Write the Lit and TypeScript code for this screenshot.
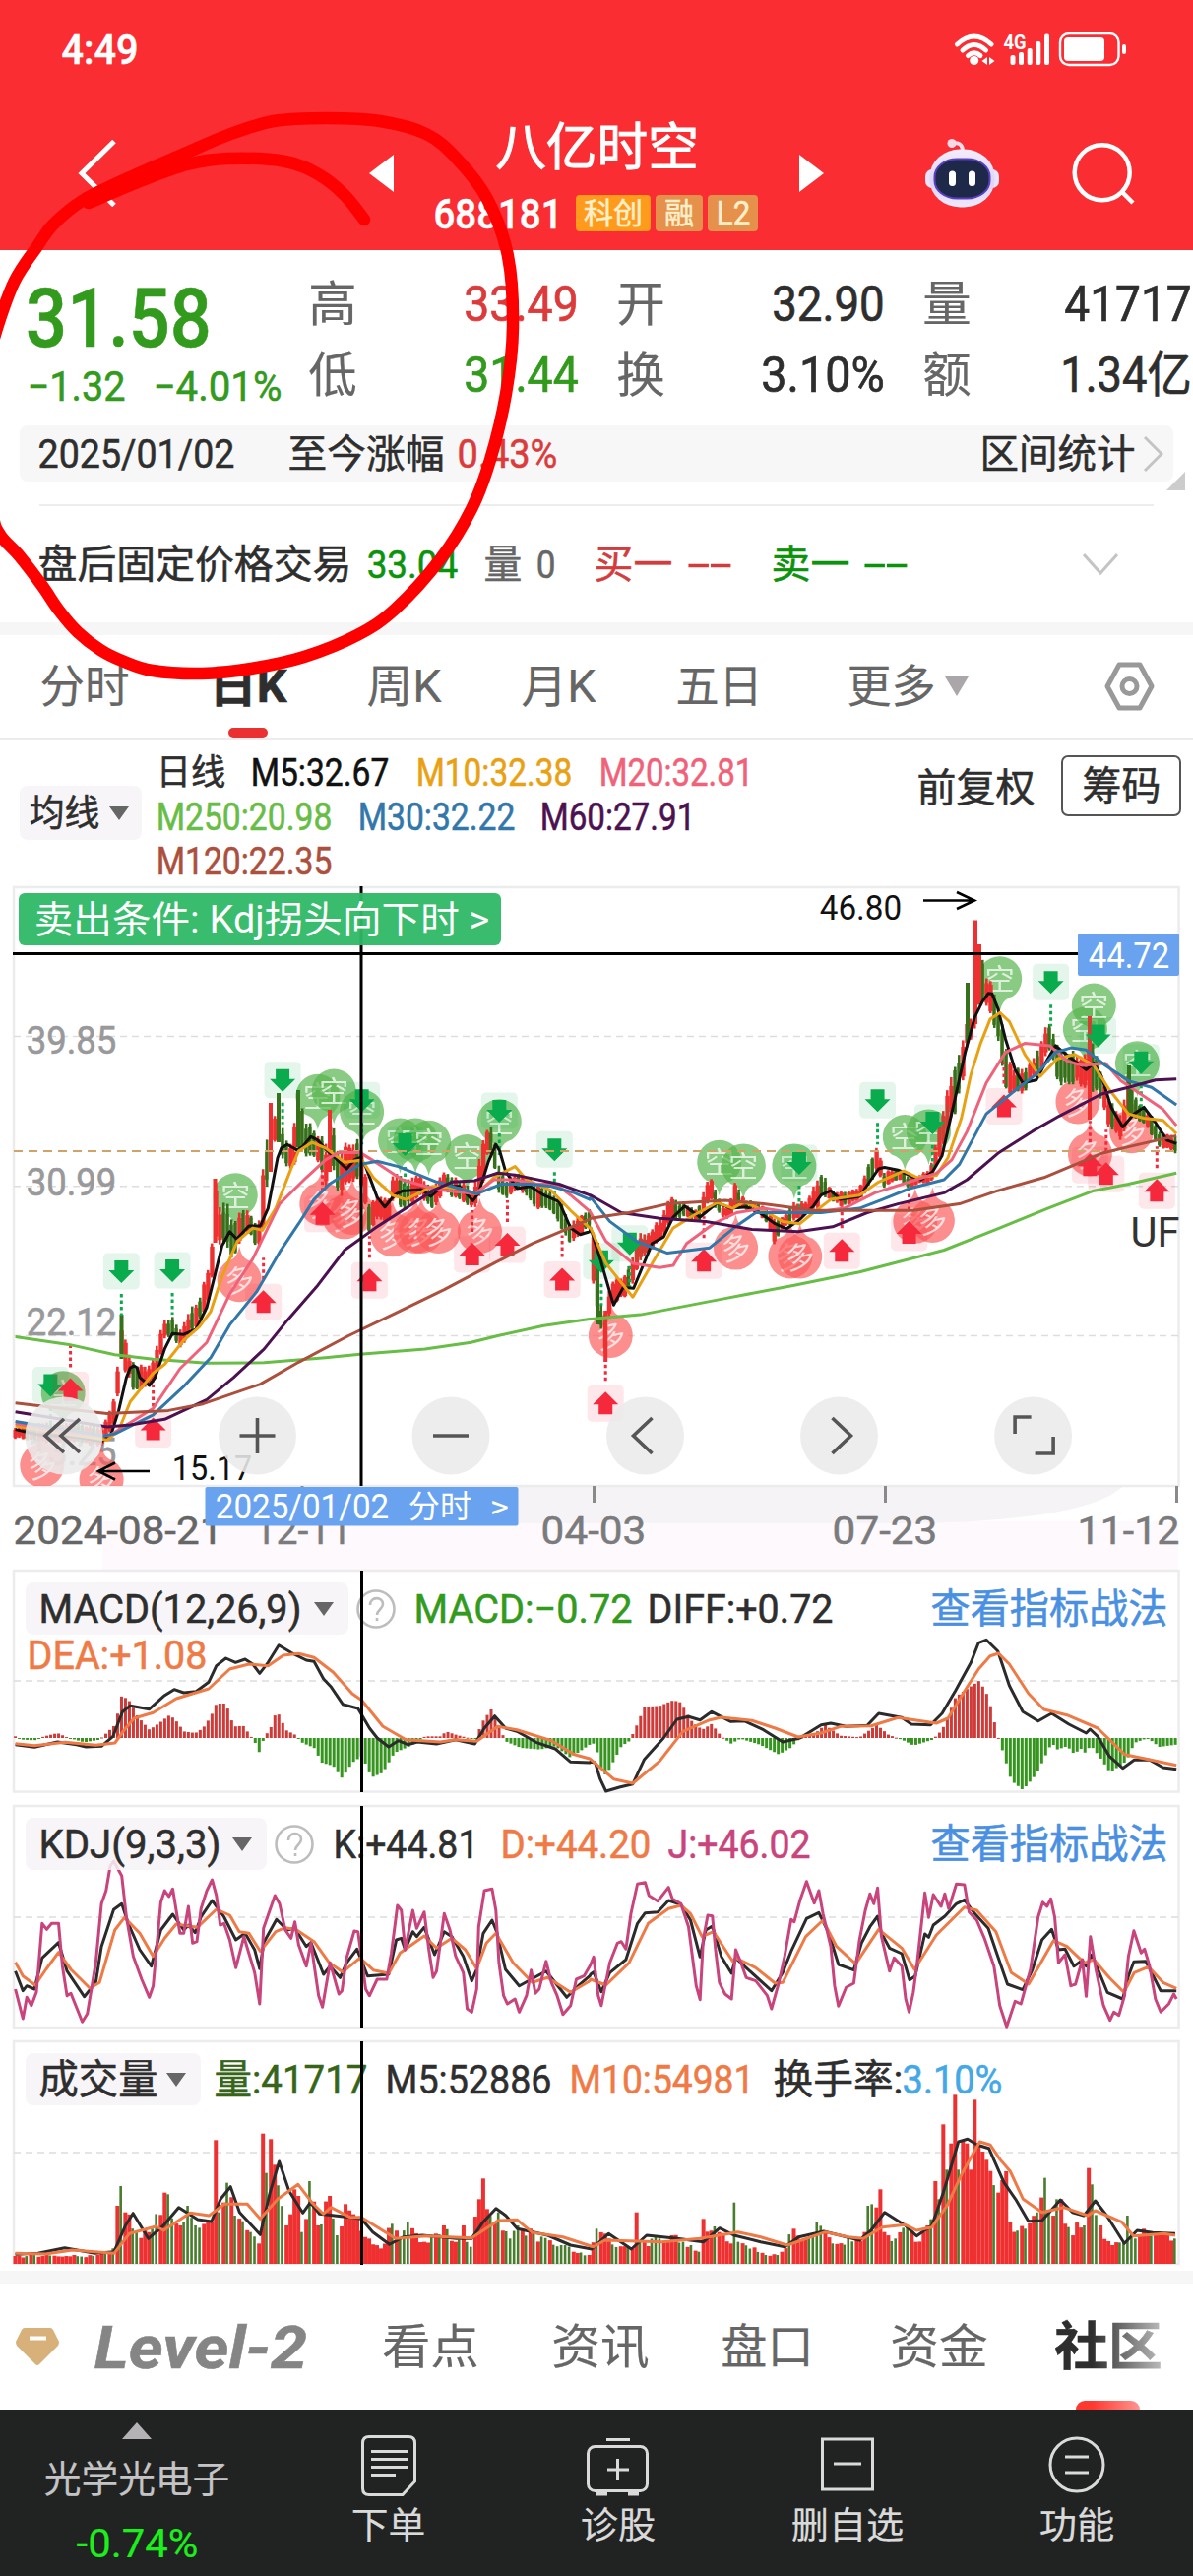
import { LitElement, html, svg, css } from "lit";
import { customElement } from "lit/decorators.js";

/** Text run with a fixed measure; `lead` is the space before it. */
const tx = (s: string, w: number, size: number, cls = "", lead = 0) => {
  const b = size * 0.035;
  return html`<svg class="t ${cls}" width=${lead + w} height=${size}>
    <text x=${lead - b} y=${size * 0.855} font-size=${size} textLength=${w + 2 * b} lengthAdjust="spacingAndGlyphs">${s}</text>
  </svg>`;
};
const st = (s: string, x: number, cy: number, w: number, size: number, cls: string) =>
  svg`<text class=${cls} x=${x - size * 0.035} y=${cy + size * 0.355} font-size=${size} textLength=${w + size * 0.07} lengthAdjust="spacingAndGlyphs">${s}</text>`;

type P = number[];
const parse = (s: string): P[] => s.trim().split(/\s+/).map((p) => p.split(",").map(Number));
/** Places a left-half and a right-half series on the page grid. */
const join = (l: string, r: string, oy: number, sy: number): P[] => [
  ...parse(l).map((p) => [p[0] / 2.5705, ...p.slice(1).map((v) => oy + v / sy)]),
  ...parse(r).map((p) => [600 + p[0] / 2.562, ...p.slice(1).map((v) => oy + v / sy)]),
];
const volScale = (s: string): P[] => parse(s).map(([x, y]) => [x / 1.294, 2060 + y / 3]);
const line = (pts: P[], cls: string) =>
  svg`<polyline class="ln ${cls}" points=${pts.map((p) => p[0].toFixed(1) + "," + p[1].toFixed(1)).join(" ")}></polyline>`;
const at = (pts: P[], x: number, k = 1): number => {
  let i = 1;
  while (i < pts.length - 1 && pts[i][0] < x) i++;
  const a = pts[i - 1], b = pts[i];
  const f = Math.max(0, Math.min(1, (x - a[0]) / (b[0] - a[0] || 1)));
  return a[k] + (b[k] - a[k]) * f;
};
/** Smooth path through every point (Catmull-Rom as cubic segments). */
const smooth = (s: string): string => {
  const p = parse(s);
  let d = `M${p[0][0]} ${p[0][1]}`;
  for (let i = 0; i < p.length - 1; i++) {
    const a = p[Math.max(0, i - 1)], b = p[i], c = p[i + 1], e = p[Math.min(p.length - 1, i + 2)];
    d += `C${b[0] + (c[0] - a[0]) / 6} ${b[1] + (c[1] - a[1]) / 6} ${c[0] - (e[0] - b[0]) / 6} ${c[1] - (e[1] - b[1]) / 6} ${c[0]} ${c[1]}`;
  }
  return d;
};
const rnd = (n: number) => {
  const v = Math.sin(n * 127.1 + 11.7) * 43758.5453;
  return v - Math.floor(v);
};
const BARS = Array.from({ length: 296 }, (_, i) => 15.5 + i * 3.995);

const MAS: [string, P[]][] = [
  ["m250", join("40,1047 180,1065 300,1088 400,1098 540,1107 690,1106 850,1095 940,1087 1110,1075 1230,1060 1300,1045 1420,1022 1540,1007",
    "0,1007 130,997 350,960 530,930 700,900 920,850 1050,805 1190,755 1310,715 1400,700 1525,675", 890, 2.24)],
  ["m5", join("40,1258 100,1270 200,1275 265,1285 290,1270 310,1215 330,1140 340,1118 350,1113 358,1118 365,1140 390,1158 405,1140 430,1075 450,1040 480,1042 512,1030 540,980 560,910 580,840 600,808 618,825 650,795 680,795 700,755 725,640 735,618 750,610 775,622 790,615 812,592 830,600 850,620 875,640 905,665 925,645 940,640 955,660 985,730 1005,752 1030,725 1050,716 1100,712 1125,728 1155,705 1200,705 1235,738 1250,720 1275,650 1295,610 1305,625 1320,670 1350,710 1385,705 1420,725 1460,740 1490,800 1515,815 1540,808",
    "0,800 25,870 60,975 85,935 112,937 160,835 190,820 215,775 245,750 285,775 330,742 365,755 405,752 440,765 480,790 510,802 545,780 580,750 600,725 625,715 650,735 700,728 730,690 750,665 765,662 800,668 835,682 860,690 890,672 915,635 950,500 975,400 1000,320 1020,285 1035,266 1045,267 1060,300 1080,370 1105,440 1125,470 1160,463 1180,430 1210,385 1245,410 1290,440 1310,425 1330,455 1355,525 1385,570 1415,540 1440,525 1470,560 1500,600 1525,608", 890, 2.24)],
  ["m10", join("40,1250 150,1265 280,1282 310,1260 340,1195 400,1130 430,1110 480,1055 520,1025 550,990 580,910 620,830 660,800 685,805 720,755 760,665 780,625 815,605 850,618 900,650 945,645 975,685 1025,725 1060,735 1130,705 1200,710 1245,722 1290,685 1345,660 1375,690 1440,715 1490,760 1540,800",
    "0,800 40,880 110,957 160,880 215,800 270,770 330,742 370,755 400,740 450,760 500,785 545,790 580,765 625,735 700,725 750,695 815,670 850,685 900,680 930,640 965,550 990,450 1015,380 1040,325 1065,310 1090,330 1130,405 1170,455 1215,415 1260,405 1310,430 1350,485 1400,540 1440,550 1490,555 1525,585", 890, 2.24)],
  ["m20", join("40,1245 200,1268 285,1272 400,1210 470,1120 540,1060 600,950 660,870 730,745 800,685 850,645 885,628 940,628 990,655 1050,690 1140,712 1240,722 1290,690 1345,690 1400,700 1450,700 1490,725 1540,762",
    "0,765 40,830 110,880 180,890 215,885 250,835 320,790 380,765 450,755 520,765 600,762 660,755 740,720 830,695 900,675 940,645 980,580 1030,470 1080,400 1130,380 1195,385 1240,420 1280,430 1340,425 1380,465 1440,500 1490,530 1525,567", 890, 2.24)],
  ["m30", join("40,1240 270,1272 300,1268 400,1225 480,1160 550,1095 600,1020 670,945 730,855 780,790 820,735 860,700 940,655 985,648 1040,660 1140,695 1245,722 1310,700 1385,700 1440,705 1500,720 1540,735",
    "0,730 50,785 120,830 200,857 310,845 380,795 430,765 600,765 700,755 760,735 830,710 920,690 960,655 1030,540 1100,490 1160,450 1210,400 1250,390 1290,395 1340,430 1400,465 1460,480 1525,520", 890, 2.24)],
  ["m60", join("40,1218 160,1235 280,1252 340,1248 430,1235 540,1190 610,1140 690,1075 750,1010 830,930 900,850 980,800 1060,755 1130,715 1180,695 1240,692 1300,675 1350,680 1460,700 1540,725",
    "0,725 80,765 180,778 300,785 420,803 540,808 630,797 720,765 800,745 920,720 980,690 1060,630 1150,580 1220,545 1330,495 1400,480 1470,463 1525,461", 890, 2.24)],
  ["m120", join("40,1198 160,1210 280,1222 440,1215 530,1200 680,1155 780,1105 910,1045 1030,995 1160,940 1290,880 1390,835 1500,795 1540,780",
    "0,778 100,765 200,745 350,737 450,745 580,760 840,760 960,745 1060,715 1180,685 1330,630 1400,615 1525,590", 890, 2.24)],
];

const RANGE = join(
  "40,1250,1280 120,1240,1290 200,1240,1290 265,1250,1300 295,1200,1260 306,1120,1200 317,1000,1100 328,1050,1130 350,1110,1175 395,1110,1165 410,1055,1130 430,1000,1060 450,1000,1050 470,1030,1080 500,975,1050 520,960,1020 550,870,960 562,690,840 575,740,850 595,730,850 610,790,880 630,745,830 650,760,810 675,800,855 688,650,800 705,530,660 715,545,610 728,500,610 740,570,660 755,620,665 768,560,670 780,500,620 800,550,640 830,580,650 850,600,720 865,540,650 885,620,750 905,600,700 935,590,700 950,640,740 965,740,820 985,720,780 1015,730,790 1030,660,730 1055,680,770 1100,680,730 1130,700,765 1160,665,720 1200,690,740 1235,710,760 1255,620,740 1275,560,620 1290,580,660 1305,660,730 1325,690,740 1350,670,710 1380,680,740 1410,700,765 1440,715,760 1465,740,800 1490,790,845 1510,770,820 1540,750,800",
  "3,740,800 8,800,980 15,830,1015 25,960,1020 38,990,1100 52,920,975 90,900,960 110,860,930 125,810,880 150,810,860 175,780,840 210,725,790 240,740,775 280,755,790 300,690,760 315,685,740 340,740,780 360,750,780 377,690,760 400,735,760 440,740,770 465,760,800 480,780,845 500,770,800 530,740,790 560,735,770 590,690,760 603,665,730 625,710,740 655,715,755 700,705,740 730,640,700 745,610,670 765,670,710 800,660,690 830,680,715 850,680,700 885,660,705 900,590,660 925,495,590 950,410,540 970,360,480 983,300,370 992,330,380 1001,210,360 1011,160,290 1030,220,300 1045,240,330 1065,300,400 1085,400,500 1100,430,500 1130,440,495 1155,405,460 1175,370,440 1188,320,400 1200,340,400 1218,380,490 1240,390,480 1265,400,470 1290,400,490 1299,350,500 1310,390,490 1335,450,520 1345,500,580 1370,530,590 1383,540,610 1400,440,540 1415,490,560 1435,520,560 1460,540,590 1480,580,620 1505,580,625 1525,590,635",
  890, 2.24);

const candles = () => BARS.map((x, i) => {
  const hi = at(RANGE, x, 1), lo = at(RANGE, x, 2), h = lo - hi;
  const slope = at(RANGE, x + 6, 1) - at(RANGE, x - 6, 1);
  const up = rnd(i) > (slope > 3 ? 0.68 : slope < -3 ? 0.15 : 0.4);
  const t = hi + rnd(i + 400) * h * 0.16, b = lo - rnd(i + 900) * h * 0.16;
  const k = h * (0.05 + rnd(i + 50) * 0.16);
  return svg`<g class=${up ? "up" : "dn"}><rect x=${x - 1.3} y=${t} width="2.6" height=${b - t}></rect>
    <rect x=${x - 2} y=${t + k} width=${up ? 4.4 : 3.4} height=${Math.max(2, b - t - k * 1.6)}></rect></g>`;
});
/** Sessions whose range stands far outside their neighbours. */
const SPIKES: [number, number, number, string][] = [
  [991, 934.5, 1040, "up"], [995, 959, 1020, "up"], [615.2, 1331, 1383, "up"], [607, 1262, 1345, "dn"], [1107, 1032, 1137, "up"],
  [983, 998, 1058, "dn"], [283, 1110, 1160, "dn"], [303, 1107, 1165, "dn"], [275, 1120, 1190, "up"], [335, 1127, 1190, "up"], [123.500, 1335, 1380, "dn"], [218.500, 1197, 1262, "up"], [1147, 1082, 1130, "dn"],
];

const marks = (l: string, r: string) => join(l, r, 890, 2.24);
const SHORT = marks("615,725 830,500 872,488 945,535 1045,600 1085,600 1120,605 1220,637 1304,557 165,1175",
  "335,650 398,658 530,658 818,592 880,580 1065,232 1287,347 1310,293 1423,425");
const LONG = marks("625,918 840,745 900,775 920,765 1025,815 1085,808 1100,808 1145,808 1253,808 110,1340 265,1372",
  "52,1045 378,845 520,865 545,865 845,785 890,783 1268,513 1300,632 1408,580");
const SELL = marks("317,898 450,896 738,463 945,509 1058,609 1304,533 1448,621 132,1157",
  "28,875 102,835 543,652 747,509 890,560 1198,240 1321,362 1433,423");
const BUY = marks("184,1168 400,1258 688,968 842,768 965,919 1233,860 1325,838 1468,917",
  "39,1199 295,874 654,852 829,811 1076,523 1300,657 1342,677 1474,715");

const balloon = ([x, y]: P, long: boolean) => svg`<g class=${long ? "bl-r" : "bl-g"} transform="translate(${x} ${y})">
  <path d=${long ? "M-13-18.500C-5-21-2-25 0-34 2-25 5-21 13-18.500A22.500 22.500 0 1 1-13-18.500Z" : "M-13 18.500C-5 21-2 25 0 34 2 25 5 21 13 18.500A22.500 22.500 0 1 0-13 18.500Z"}></path>
  <text class="bl-t" x="-15" y="11" font-size="30" transform=${long ? "rotate(-12)" : ""}>${long ? "多" : "空"}</text></g>`;
const arrow = ([x, y]: P, buy: boolean) => svg`<g class=${buy ? "ar-r" : "ar-g"} transform="translate(${x} ${y}) scale(1 ${buy ? -1 : 1})">
  <rect class="ar-b" x="-18.5" y="-18.5" width="37" height="37" rx="5"></rect>
  <path class="ar-s" d="M0 23V45"></path><path class="ar-a" d="M-7-11H7V-1H13L0 12-13-1H-7Z"></path></g>`;

const DIFF = join("40,575 90,583 150,567 200,575 225,582 265,580 295,550 320,475 340,457 390,467 430,425 455,407 480,417 512,413 545,385 565,335 590,312 615,325 640,315 660,330 678,358 700,325 728,272 760,295 800,318 820,322 845,375 865,400 895,452 935,465 965,525 985,555 1015,582 1040,563 1065,575 1090,567 1140,573 1190,560 1240,573 1265,525 1292,488 1320,525 1350,535 1400,568 1450,588 1490,628 1540,630",
  "0,628 12,630 25,680 40,717 75,705 110,695 140,620 190,555 225,498 255,490 285,500 315,475 365,505 400,503 450,530 500,567 545,555 600,515 625,510 665,520 720,517 750,480 810,493 835,513 885,515 915,480 950,410 990,325 1010,265 1030,256 1060,290 1090,395 1125,475 1165,503 1200,480 1245,513 1290,540 1300,528 1320,550 1350,610 1385,647 1415,622 1455,622 1490,645 1525,650", 1580, 3);
const DEA = join("40,572 90,578 170,568 250,577 300,570 325,530 350,495 400,478 460,435 545,405 600,345 650,330 700,335 740,303 780,298 820,310 870,355 920,420 945,440 1000,520 1060,560 1150,567 1190,560 1245,565 1300,520 1350,530 1440,563 1500,605 1540,618",
  "0,620 60,680 110,693 180,625 240,535 310,500 340,492 420,502 480,525 540,552 600,540 650,520 730,518 800,493 900,510 930,495 980,400 1010,345 1040,305 1062,297 1090,330 1140,420 1180,468 1240,485 1320,525 1390,605 1440,617 1525,638", 1580, 3);
const HIST = join("40,550 60,560 90,562 115,550 150,540 175,553 220,568 260,560 300,515 310,465 318,424 340,445 360,490 390,530 415,510 440,487 455,495 480,535 510,540 530,525 550,490 565,450 590,450 610,520 635,518 655,550 668,573 678,602 690,550 705,530 720,478 730,485 745,530 770,545 790,570 820,585 840,630 870,640 893,677 920,630 945,610 970,675 1000,660 1030,600 1070,580 1110,550 1150,550 1165,535 1190,545 1240,560 1260,505 1283,467 1300,510 1320,565 1360,585 1410,590 1450,580 1490,615 1540,575",
  "0,575 12,570 25,640 40,670 60,625 80,580 100,565 115,530 140,460 180,457 215,440 235,447 260,500 290,530 315,512 340,550 365,572 390,557 440,575 490,605 520,585 545,555 580,545 610,515 650,548 700,553 745,515 775,545 820,565 840,578 890,560 915,530 950,430 980,405 1012,380 1035,430 1060,550 1075,605 1095,685 1125,713 1160,665 1200,570 1215,590 1240,580 1258,603 1280,585 1290,607 1300,575 1320,605 1352,660 1395,625 1415,570 1450,555 1480,582 1525,575", 1580, 3);

const KJ = join("40,1320 60,1410 70,1345 82,1370 95,1330 110,1120 122,1138 135,1120 153,1120 163,1250 175,1340 185,1333 215,1420 228,1395 240,1310 250,1240 265,1060 277,1020 288,945 297,930 318,975 330,1100 348,1220 370,1290 390,1345 400,1310 420,1055 430,1020 441,1038 451,1015 470,1150 480,1150 492,1068 503,1180 514,1175 525,1075 540,1020 554,987 565,1035 575,1125 585,1120 600,1170 616,1255 637,1160 665,1270 678,1365 688,1135 700,1095 718,1035 730,1060 745,1140 760,1165 770,1115 780,1185 800,1250 812,1180 832,1340 842,1375 862,1240 885,1335 893,1325 905,1225 925,1143 935,1145 945,1230 955,1320 965,1340 985,1290 1010,1290 1022,1210 1038,1065 1048,1080 1058,1200 1078,1080 1088,1135 1108,1085 1120,1200 1131,1285 1140,1265 1160,1090 1175,1140 1190,1220 1210,1270 1220,1380 1232,1390 1245,1320 1250,1130 1265,1020 1285,1015 1295,1080 1303,1240 1315,1340 1325,1365 1345,1350 1356,1390 1375,1340 1387,1262 1398,1333 1408,1320 1426,1235 1440,1300 1455,1340 1470,1397 1490,1370 1505,1290 1525,1280 1540,1250",
  "0,1245 8,1222 20,1340 28,1370 50,1240 70,1180 80,1175 92,1198 105,1090 122,1000 142,995 152,1035 175,1052 203,1010 213,1045 235,1060 255,1130 275,1310 285,1352 293,1170 305,1095 317,1097 325,1200 335,1300 350,1335 367,1350 378,1200 390,1235 405,1285 430,1295 460,1340 471,1380 490,1300 505,1220 522,1108 530,1115 545,1050 562,992 582,1058 594,1020 605,1090 625,1190 635,1310 645,1372 665,1315 685,1302 700,1170 715,1080 727,1030 737,1060 747,1012 757,1160 778,1265 790,1225 810,1250 820,1350 829,1390 840,1330 850,1240 870,1027 880,1102 892,1032 912,1068 922,1030 932,1075 952,1000 973,1002 985,1085 1005,1110 1025,1165 1050,1250 1065,1370 1083,1435 1105,1357 1120,1365 1145,1260 1165,1100 1177,1055 1188,1068 1198,1045 1208,1100 1218,1240 1235,1215 1250,1310 1262,1305 1280,1230 1290,1342 1301,1160 1315,1260 1335,1370 1352,1415 1362,1390 1375,1400 1390,1340 1400,1220 1414,1142 1433,1210 1442,1198 1455,1250 1470,1350 1484,1390 1505,1365 1518,1335 1525,1350", 1580, 3);
const KK = join("40,1265 60,1325 70,1310 90,1320 110,1225 153,1178 175,1265 220,1343 250,1300 265,1190 297,1078 318,1060 335,1120 365,1200 395,1250 420,1140 451,1092 480,1140 492,1125 510,1148 525,1100 554,1050 585,1100 616,1170 640,1150 665,1200 678,1258 690,1175 722,1108 750,1140 770,1135 800,1190 812,1178 845,1275 862,1250 888,1285 905,1240 932,1198 960,1280 1015,1275 1035,1170 1048,1165 1058,1200 1078,1145 1088,1160 1108,1132 1135,1215 1160,1145 1180,1160 1210,1220 1232,1295 1245,1260 1262,1150 1285,1110 1297,1145 1320,1260 1356,1310 1426,1265 1480,1345 1510,1310 1540,1280",
  "0,1275 8,1268 28,1328 50,1270 92,1230 122,1120 142,1088 175,1085 203,1050 235,1062 260,1110 285,1222 300,1140 317,1128 340,1220 367,1272 378,1225 405,1255 471,1325 500,1270 522,1205 562,1105 594,1087 620,1150 645,1245 685,1262 705,1180 727,1130 747,1098 757,1150 778,1195 810,1212 830,1292 845,1280 870,1152 880,1162 892,1125 922,1098 952,1060 973,1048 1000,1090 1035,1135 1060,1220 1085,1305 1125,1322 1150,1260 1175,1170 1200,1138 1218,1200 1235,1198 1258,1250 1280,1232 1290,1250 1305,1215 1345,1330 1385,1350 1400,1280 1414,1237 1445,1235 1484,1325 1525,1325", 1580, 3);
const KD = join("40,1238 60,1280 92,1308 120,1260 153,1208 185,1260 235,1318 260,1300 300,1140 325,1102 365,1150 400,1220 430,1165 460,1122 515,1132 565,1077 600,1095 625,1145 650,1150 680,1205 720,1145 745,1133 775,1140 820,1175 860,1240 895,1268 940,1225 975,1262 1015,1272 1045,1210 1108,1158 1140,1195 1180,1165 1215,1200 1245,1258 1270,1180 1295,1150 1340,1240 1390,1300 1430,1285 1490,1330 1540,1295",
  "0,1290 40,1308 100,1240 150,1120 203,1075 235,1065 260,1090 290,1160 320,1145 370,1235 378,1225 430,1255 480,1302 500,1300 560,1160 605,1110 640,1190 690,1243 750,1138 810,1195 843,1260 900,1155 973,1070 1005,1080 1055,1145 1095,1270 1140,1305 1205,1172 1240,1190 1285,1240 1310,1230 1350,1285 1388,1330 1415,1270 1452,1252 1490,1300 1525,1318", 1580, 3);

const VOL = volScale("20,693 60,690 100,690 130,690 150,670 155,540 160,480 165,560 180,620 200,610 215,500 222,505 235,600 250,540 260,600 278,590 284,340 289,560 292,530 300,470 310,570 330,620 341,655 346,320 351,440 357,337 362,415 375,600 385,490 392,510 400,620 407,465 420,600 432,510 445,630 455,535 470,580 485,640 500,670 516,595 525,640 536,590 560,650 584,600 600,650 610,600 620,665 629,520 635,457 642,550 655,560 670,640 683,600 700,620 740,660 775,690 787,610 800,640 832,670 837,560 842,650 870,640 882,630 900,650 918,680 926,580 945,620 961,655 967,530 973,650 1010,690 1030,680 1043,610 1060,640 1077,590 1095,655 1125,640 1135,620 1143,540 1152,545 1158,490 1163,620 1180,640 1192,600 1205,650 1220,600 1230,465 1236,520 1241,292 1246,430 1251,350 1257,202 1262,430 1267,340 1272,350 1277,430 1282,217 1288,360 1298,400 1310,500 1323,435 1330,590 1350,610 1365,560 1375,455 1382,560 1394,520 1405,605 1427,600 1433,425 1438,475 1445,600 1460,660 1480,650 1484,570 1492,640 1505,610 1520,620 1545,640");
const V5 = volScale("20,688 50,685 85,668 125,685 150,680 165,600 175,563 195,640 215,600 235,545 260,582 278,588 290,520 303,482 315,560 342,628 355,500 367,405 380,495 398,562 408,530 420,565 460,575 475,580 490,620 512,658 530,635 555,630 580,635 600,640 620,640 635,590 652,548 665,570 680,610 720,630 750,660 778,672 800,625 830,672 850,630 890,640 925,650 946,608 965,630 1000,650 1032,665 1050,635 1083,618 1130,645 1145,615 1163,560 1190,600 1205,632 1225,600 1240,500 1260,345 1272,337 1285,355 1300,365 1320,470 1335,520 1352,587 1370,585 1394,522 1410,560 1425,570 1440,525 1455,570 1478,655 1495,615 1515,622 1545,625");
const V10 = volScale("20,685 60,687 95,675 150,685 170,625 205,603 215,615 250,562 275,570 295,535 325,535 342,580 365,520 392,475 410,530 425,565 435,545 460,575 475,575 520,640 560,632 620,638 655,585 680,583 700,622 740,635 780,665 795,645 870,650 920,640 970,620 1000,635 1035,660 1085,620 1115,635 1135,640 1160,605 1190,598 1205,615 1225,605 1245,540 1265,440 1288,345 1302,355 1315,400 1328,435 1345,520 1370,560 1398,545 1430,570 1440,555 1475,590 1490,632 1530,625 1545,630");

const volBars = () => BARS.map((x, i) => {
  const near = VOL.filter((p) => Math.abs(p[0] - x) <= 2).map((p) => p[1]);
  const y0 = near.length ? Math.min(...near) : at(VOL, x);
  const peak = y0 < 2232;
  const up = rnd(i) > 0.4 || y0 < 2192;
  const y = Math.min(2294, peak || near.length ? y0 : y0 + (rnd(i + 77) - 0.3) * (2299 - y0) * 0.35);
  return svg`<rect class=${up ? "vu" : "vd"} x=${x - 2} y=${y} width=${up ? 4 : 2.6} height=${2299 - y}></rect>`;
});
const histBars = () => BARS.map((x) => {
  const y = at(HIST, x), z = 1765;
  return svg`<rect class=${y < z ? "hu" : "hd"} x=${x - 1.4} y=${Math.min(y, z)} width="3" height=${Math.max(1, Math.abs(y - z))}></rect>`;
});

const caret = () => html`<svg class="caret" width="20" height="14"><path d="M0 0H20L10 14Z"></path></svg>`;
const help = () => html`<svg class="help" width="40" height="40" viewBox="-20 -20 40 40"><circle r="18.5"></circle>
  <path d="M-6-4C-6-13 7-13 7-5 7 0 1 1 1 6M1 9V12"></path></svg>`;
const round = (x: number, d: string) => svg`<g class="rb" transform="translate(${x} 1458)"><circle r="39.5"></circle><path d=${d}></path></g>`;

@customElement("app-root")
export class AppRoot extends LitElement {
  static styles = css`
    :host { display: block; position: relative; width: 1212px; height: 2616px; overflow: hidden; background: #fff;
      font-family: Roboto, "Noto Sans CJK SC", sans-serif; font-weight: 400; color: #2e2e2e; }
    svg { display: block; flex: none; }
    .t { overflow: visible; fill: currentColor; stroke: currentColor; stroke-width: .55; }
    .row { display: flex; align-items: center; }
    .med { font-weight: 500; } .bold { font-weight: 700; }
    .g { color: #329a1d; } .r { color: #dc3b3b; } .gr { color: #666; } .w { color: #fff; }
    .head { height: 254px; background: #fa2d33; color: #fff; }
    .status { height: 99px; justify-content: space-between; padding: 0 67px 0 64px; }
    .status svg { fill: #fff; }
    .nav { height: 154px; }
    .back { margin-left: 79px; fill: none; stroke: #fff; stroke-width: 5; }
    .prev { margin-left: 257px; fill: #fff; } .next { margin-left: 41px; fill: #fff; }
    .name { margin-left: 42px; width: 329px; }
    .title { height: 96px; justify-content: center; } .title svg { margin-top: 5px; stroke-width: 1; } .code { height: 42px; gap: 5px; padding-bottom: 16px; }
    .tag { height: 37px; border-radius: 4px; background: #e5914b; color: #ffefc8; display: flex; align-items: center; justify-content: center; width: 48px; }
    .tag.kc { width: 76px; margin-left: 10px; background: #ff9b1c; } .tag.l2 { width: 51px; }
    .bot { margin-left: 102px; } .find { margin-left: 74px; fill: none; stroke: #fff; stroke-width: 4.5; }
    .quote { height: 178px; display: flex; }
    .last { width: 285px; flex: none; padding: 26px 0 0 29px; box-sizing: border-box; }
    .chg { height: 50px; margin-top: 3px; }
    .grid { display: grid; grid-template-columns: 271px 269px 270px; column-gap: 42px; grid-template-rows: 72px 72px; padding: 18px 0 0 30px; }
    .cell { display: flex; align-items: center; justify-content: space-between; }
    .cell .t { stroke-width: .7; }
    .cell .gr { stroke-width: .2; }
    .rangebar { height: 57px; margin: 0 20px; background: #f7f7f7; border-radius: 8px; padding: 0 10px 0 20px; }
    .sp { flex: 1; }
    .thin { fill: none; stroke: #c4c4c4; stroke-width: 3; }
    .corner { height: 23px; display: flex; justify-content: flex-end; padding-right: 8px; align-items: flex-start; }
    .corner svg { fill: #ccc; margin-top: -10px; }
    .after { height: 120px; box-sizing: border-box; margin: 0 40px; padding-right: 36px; border-top: 2px solid #ededed; }
    .deep { color: #0b930b; } .buy { color: #d23c3c; }
    .band { height: 13px; background: #f6f6f6; }
    .tabs { height: 106px; border-bottom: 2px solid #ececec; box-sizing: border-box; padding: 0 39px 0 42px; gap: 84px; }
    .tab { display: flex; flex-direction: column; align-items: center; height: 104px; justify-content: space-between; }
    .tab::before { content: ""; height: 10px; }
    .tab::after { content: ""; height: 10px; width: 40px; border-radius: 5px; }
    .tab.on::after { background: #ea3030; }
    .tab .gr { stroke-width: .2; }
    .more { fill: #aaa6aa; margin-left: -73px; } .hex { fill: none; stroke: #999; stroke-width: 5; margin-left: auto; }
    .tab.last-tab { margin-left: 5px; }
    .legend { height: 149px; display: flex; }
    .pick { background: #f7f3f7d9; border-radius: 8px; display: flex; align-items: center; justify-content: space-between; box-sizing: border-box; height: 53px; }
    .ma { width: 124px; margin: 47px 16px 0 20px; padding: 0 13px 0 11px; height: 55px; }
    .caret { fill: #666; }
    .mas { width: 773px; padding-top: 10px; } .mas .row { height: 45px; }
    .fq { height: 97px; gap: 28px; }
    .chip { width: 118px; height: 58px; border: 2px solid #555; border-radius: 7px; display: flex; align-items: center; justify-content: center; margin-top: -4px; }
    .m5 { color: #111; } .m10 { color: #e9a113; } .m20 { color: #f0627a; } .m250 { color: #67bd45; } .m30 { color: #3277a9; } .m60 { color: #4c1150; } .m120 { color: #ac4f3d; }
    .panel { position: relative; }
    .p-main { height: 695px; } .p-macd, .p-kdj { height: 239px; } .p-vol { height: 233px; }
    .panel > svg { overflow: visible; }
    .frame { fill: none; stroke: #ececec; stroke-width: 2.5; }
    .dash { stroke: #ddd; stroke-width: 1.5; stroke-dasharray: 7 5; } .dash.o { stroke: #d0a468; stroke-width: 1.8; stroke-dasharray: 9 6; }
    .ln { fill: none; stroke: currentColor; stroke-width: 3; stroke-linejoin: round; }
    .blk { color: #2b2b2b; } .org { color: #ef7a45; } .pnk { color: #c9447c; }
    .up { fill: #ef3030; } .dn { fill: #37701a; }
    .vu { fill: #ee3130; } .vd { fill: #477d2c; } .hu { fill: #cf3b38; } .hd { fill: #36951f; }
    .ax { fill: #99989b; stroke: #99989b; stroke-width: .6; } .dt { fill: #7b7b7d; stroke: #7b7b7d; stroke-width: .5; } .dt0 { fill: #666; stroke: #666; stroke-width: .5; } .ink { fill: #111; } .wt { fill: #fff; } .uf { fill: #333; }
    .bl-g { fill: #55b34cb0; } .bl-r { fill: #fa5c5cb0; } .bl-t { fill: #fff; opacity: .72; }
    .ar-g { color: #0aab4c; fill: #0aab4c; } .ar-r { color: #f5283c; fill: #f5283c; }
    .ar-b { opacity: .11; } .ar-s { stroke: currentColor; stroke-width: 3; stroke-dasharray: 3.5 3; }
    .rb circle { fill: #eaeaeae0; } .rb path { fill: none; stroke: #555; stroke-width: 3.6; }
    .x { stroke: #000; stroke-width: 3; } .pt { fill: none; stroke: #000; stroke-width: 2.6; }
    .badge { fill: #2fb866f2; } .pop { fill: #69a3f0; } .tick { stroke: #8a8a8a; stroke-width: 3; }
    .pinkish { fill: #fdf9fd; } .shade { fill: #f5f3f5; }
    .over { position: absolute; left: 0; top: 0; width: 100%; }
    .keys { height: 53px; padding: 12px 27px 0 26px; }
    .keys .pick { padding: 0 15px; }
    .w1 { width: 328px; } .w2 { width: 245px; } .w3 { width: 178px; }
    .help { margin-left: 8px; fill: none; stroke: #bdbdbd; stroke-width: 2.6; }
    .link { color: #4a90e2; } .vg { color: #36651a; } .sky { color: #42a8e6; }
    .dea { padding: 0 0 0 29px; }
    .cross { position: absolute; left: 365.5px; top: 0; width: 3px; background: #000; }
    .c1 { height: 225px; } .c3 { height: 227px; }
    .b2 { height: 13px; background: #f6f6f6; }
    .feed { height: 128px; box-sizing: border-box; }
    .feed .gr { stroke-width: .2; }
    .gem { margin-left: 16px; } .lv { color: #858585; font-style: italic; font-weight: 700; }
    .hot { margin-left: 70px; width: 107px; height: 128px; display: flex; flex-direction: column; align-items: center; justify-content: space-between; overflow: hidden;
      -webkit-mask-image: linear-gradient(90deg, #000 35%, #0005 100%); }
    .hot::before { content: ""; height: 9px; }
    .hot::after { content: ""; width: 65px; height: 9px; background: #ff3830; border-radius: 9px 9px 0 0; }
    .foot { height: 169px; background: #212322; color: #dadada; display: grid; grid-template-columns: 278px 233px 233px 233px 233px; }
    .foot .t { stroke-width: .2; }
    .sec { display: flex; flex-direction: column; align-items: center; padding-top: 13px; color: #c4c3c5; }
    .sec .caret { fill: #b5b2b6; } .neon { color: #1cf01c; margin-top: 27px; } .sn { margin-top: 21px; }
    .act { display: flex; flex-direction: column; align-items: center; padding-top: 26px; gap: 11px; }
    .act > svg:first-child { fill: none; stroke: #dadada; stroke-width: 3; }
    .scrawl { position: absolute; left: 0; top: 0; fill: none; stroke: #f00; stroke-width: 12.5; stroke-linecap: round; stroke-linejoin: round; }
  `;

  private cell(k: string, v: string, w: number, c = "") {
    return html`<div class="cell">${tx(k, 46, 49, "gr")}${tx(v, w, 50, c)}</div>`;
  }

  private header() {
    return html`<header class="head">
      <div class="status row">${tx("4:49", 75, 42, "med")}
        <svg width="176" height="36" viewBox="970 31 176 36">
          <circle cx="990.7" cy="60.5" r="4.5"></circle>
          <g fill="none" stroke="#fff" stroke-width="5" stroke-linecap="round"><path d="M973.5 44Q990.7 28 1008 44"></path><path d="M979 50Q990.7 39 1002.500 50"></path><path d="M984.500 55.500Q990.700 50 997 55.500"></path></g>
          <path d="M1004 57V65L998.500 61ZM1006 57V65L1011.500 61Z"></path>
          <text x="1020.500" y="48.500" font-size="20" font-weight="700" textLength="23" lengthAdjust="spacingAndGlyphs">4G</text>
          <rect x="1027.500" y="55" width="5" height="10" rx="2"></rect><rect x="1036" y="52" width="5" height="13" rx="2"></rect><rect x="1044.700" y="48" width="5" height="17" rx="2"></rect><rect x="1053.300" y="41" width="5" height="24" rx="2"></rect><rect x="1062" y="33.500" width="5" height="31.500" rx="2"></rect>
          <rect x="1078" y="33" width="59.500" height="32" rx="9" fill="none" stroke="#fff" stroke-width="2.400"></rect>
          <rect x="1082" y="37" width="41" height="24" rx="4"></rect><rect x="1141" y="44" width="4" height="10" rx="2"></rect>
        </svg></div>
      <div class="nav row">
        <svg class="back" width="39" height="68"><path d="M37 1.500L4 34 37 66.500"></path></svg>
        <svg class="prev" width="25" height="40"><path d="M25 1V39L0 20Z"></path></svg>
        <div class="name"><div class="title row">${tx("八亿时空", 203, 52)}</div>
          <div class="code row">${tx("688181", 128, 43, "med")}<span class="tag kc">${tx("科创", 58, 30)}</span><span class="tag">${tx("融", 28, 30)}</span><span class="tag l2">${tx("L2", 32, 33)}</span></div></div>
        <svg class="next" width="25" height="40"><path d="M0 1V39L25 20Z"></path></svg>
        <svg class="bot" width="76" height="72" viewBox="940 140 76 72">
          <defs><linearGradient id="sh" x1="0" y1="0" x2="0" y2="1"><stop offset="0" stop-color="#f4ebfb"></stop><stop offset=".6" stop-color="#dcd3f6"></stop><stop offset="1" stop-color="#f0e9fb"></stop></linearGradient></defs>
          <path d="M968 146Q979 143 979 154" fill="none" stroke="#f1dcee" stroke-width="4"></path><circle cx="968" cy="145.500" r="4.500" fill="#f6d9e4"></circle>
          <rect x="941" y="172" width="75" height="19" rx="7" fill="#ece2fa"></rect>
          <rect x="945.500" y="151.500" width="66" height="59" rx="31" ry="28" fill="url(#sh)"></rect>
          <rect x="950.500" y="161.500" width="56" height="40" rx="23" ry="18" fill="#1e2848" stroke="#5a3fc0" stroke-width="2"></rect>
          <rect x="965" y="173.500" width="7" height="15.500" rx="3.500" fill="#fff"></rect><rect x="985" y="173.500" width="7" height="15.500" rx="3.500" fill="#fff"></rect>
        </svg>
        <svg class="find" width="64" height="64" viewBox="1090 146 64 64"><circle cx="1120.700" cy="177.300" r="28"></circle><path d="M1140 196L1152 208"></path></svg>
      </div></header>`;
  }

  private main() {
    const grid = [1052.5, 1204.7, 1356.5];
    return html`<section class="panel p-main"><svg width="1212" height="695" viewBox="0 900 1212 695">
      <rect class="pinkish" x="104" y="1545" width="1093" height="50"></rect>
      <path class="shade" d="M209 1510H1140Q1100 1547 900 1547H209Z"></path>
      <rect class="frame" x="14" y="901" width="1183.500" height="608"></rect>
      ${grid.map((y) => svg`<path class="dash" d="M14 ${y}H1197"></path>`)}
      ${st("39.85", 28, 1057, 89, 38, "ax")}${st("30.99", 28, 1200.500, 89, 38, "ax")}${st("22.12", 28, 1343, 89, 38, "ax")}${st("13.25", 30, 1475, 87, 38, "ax")}
      <clipPath id="cp"><rect x="0" y="900" width="1212" height="609"></rect></clipPath>
      <g clip-path="url(#cp)">${SHORT.map((p) => balloon(p, false))}${LONG.map((p) => balloon(p, true))}
        ${candles()}${SPIKES.map(([x, y, b, c]) => svg`<rect class=${c} x=${x - 2} y=${y} width="4" height=${b - y}></rect>`)}
        ${SELL.map((p) => arrow(p, false))}${BUY.map((p) => arrow(p, true))}</g>
      <path class="dash o" d="M14 1169H1197"></path>
      ${MAS.map(([c, p]) => line(p, c))}
      ${st("46.80", 834, 922, 81, 35, "ink")}<path class="pt" d="M938 914.500H990M972 906L990 914.500 972 923"></path>
      ${st("15.17", 176, 1491, 79, 35, "ink")}<path class="pt" d="M152 1494H100M117 1485.500L100 1494 117 1502.500"></path>
      ${st("UF", 1150, 1251, 47, 42, "uf")}
      ${round(65, "M0-17L-19 0 0 17M16-17L-3 0 16 17")}${round(261.500, "M-18 0H18M0-18V18")}${round(458, "M-18 0H18")}
      ${round(655.500, "M7-18L-12 0 7 18")}${round(852.500, "M-7-18L12 0-7 18")}${round(1049.600, "M-2-19H-18.500V-2M2 18H20.500V1")}
      <path class="x" d="M13 968.500H1197M367 900V1509"></path>
      <rect class="badge" x="19" y="907" width="490" height="53" rx="6"></rect>${st("卖出条件: Kdj拐头向下时 >", 36, 934, 460, 38, "wt")}
      <rect class="pop" x="1095" y="948" width="103" height="43" rx="2"></rect>${st("44.72", 1107, 970, 80, 36, "wt")}
      ${st("2024-08-21", 15, 1554, 210, 39, "dt0")}${st("12-11", 260, 1554, 96, 39, "dt")}${st("04-03", 551, 1554, 104, 39, "dt")}${st("07-23", 847, 1554, 104, 39, "dt")}${st("11-12", 1096, 1554, 101, 39, "dt")}
      <path class="tick" d="M307 1509V1526M603.500 1509V1526M899.500 1509V1526M1195.500 1509V1526"></path>
      <rect class="pop" x="208.500" y="1510" width="318" height="39.500" rx="2"></rect>
      ${st("2025/01/02", 220, 1530, 174, 35, "wt")}${st("分时", 416, 1530, 62, 32, "wt")}${st(">", 499, 1530, 17, 32, "wt")}
    </svg></section>`;
  }

  render() {
    return html`${this.header()}
      <section class="quote">
        <div class="last">${tx("31.58", 183, 84, "g med")}<div class="chg row">${tx("−1.32", 97, 42, "g")}${tx("−4.01%", 128, 42, "g", 31)}</div></div>
        <div class="grid">${this.cell("高", "33.49", 113, "r")}${this.cell("开", "32.90", 111)}${this.cell("量", "41717", 126)}
          ${this.cell("低", "31.44", 113, "g")}${this.cell("换", "3.10%", 122)}${this.cell("额", "1.34亿", 130)}</div>
      </section>
      <div class="rangebar row">${tx("2025/01/02", 197, 40)}${tx("至今涨幅", 156, 40, "", 57)}${tx("0.43%", 99, 40, "r", 16)}<span class="sp"></span>${tx("区间统计", 155, 40)}
        <svg class="thin" width="30" height="40"><path d="M11 3L28 20 11 37"></path></svg></div>
      <div class="corner"><svg width="19" height="19"><path d="M19 0V19H0Z"></path></svg></div>
      <div class="after row">${tx("盘后固定价格交易", 316, 40)}${tx("33.04", 90, 39, "deep", 18)}${tx("量", 36, 40, "gr", 29)}${tx("0", 17, 39, "gr", 17)}${tx("买一", 77, 40, "buy", 42)}${tx("--", 42, 40, "buy", 18)}${tx("卖一", 77, 40, "deep", 43)}${tx("--", 42, 40, "deep", 17)}
        <span class="sp"></span><svg class="thin" width="36" height="24"><path d="M1 2L18 21 35 2"></path></svg></div>
      <div class="band"></div>
      <nav class="tabs row">
        <div class="tab">${tx("分时", 88, 46, "gr")}</div><div class="tab on">${tx("日K", 76, 46, "bold")}</div><div class="tab">${tx("周K", 73, 46, "gr")}</div>
        <div class="tab">${tx("月K", 73, 46, "gr")}</div><div class="tab">${tx("五日", 85, 46, "gr")}</div><div class="tab last-tab">${tx("更多", 87, 46, "gr")}</div>
        <svg class="more" width="24" height="20"><path d="M0 0H24L12 20Z"></path></svg>
        <svg class="hex" width="51" height="50"><path d="M15 3H36L48 25 36 47H15L3 25Z" stroke-linejoin="round"></path><circle cx="25.500" cy="25" r="7.500"></circle></svg>
      </nav>
      <section class="legend">
        <div class="pick ma">${tx("均线", 69, 37)}${caret()}</div>
        <div class="mas"><div class="row">${tx("日线", 68, 36)}${tx("M5:32.67", 138, 38, "m5", 28)}${tx("M10:32.38", 156, 38, "m10", 30)}${tx("M20:32.81", 154, 38, "m20", 30)}</div>
          <div class="row">${tx("M250:20.98", 176, 38, "m250")}${tx("M30:32.22", 157, 38, "m30", 29)}${tx("M60:27.91", 155, 38, "m60", 28)}</div>
          <div class="row">${tx("M120:22.35", 176, 38, "m120")}</div></div>
        <div class="fq row">${tx("前复权", 117, 40)}<span class="chip">${tx("筹码", 77, 40)}</span></div>
      </section>
      ${this.main()}
      <section class="panel p-macd"><svg width="1212" height="239" viewBox="0 1595 1212 239">
          <rect class="frame" x="14" y="1595" width="1183.500" height="224.500"></rect><path class="dash" d="M14 1707H1197"></path>
          ${histBars()}${line(DIFF, "blk")}${line(DEA, "org")}</svg>
        <div class="over"><div class="keys row"><span class="pick w1">${tx("MACD(12,26,9)", 264, 41)}${caret()}</span>${help()}
          ${tx("MACD:−0.72", 219, 41, "g", 20)}${tx("DIFF:+0.72", 186, 41, "", 18)}<span class="sp"></span>${tx("查看指标战法", 238, 41, "link")}</div>
          <div class="dea">${tx("DEA:+1.08", 180, 41, "org")}</div></div><i class="cross c1"></i></section>
      <section class="panel p-kdj"><svg width="1212" height="239" viewBox="0 1834 1212 239">
          <rect class="frame" x="14" y="1834" width="1183.500" height="225"></rect><path class="dash" d="M14 1947H1197"></path>
          ${line(KK, "blk")}${line(KD, "org")}${line(KJ, "pnk")}</svg>
        <div class="over"><div class="keys row"><span class="pick w2">${tx("KDJ(9,3,3)", 182, 41)}${caret()}</span>${help()}
          ${tx("K:+44.81", 145, 41, "", 21)}${tx("D:+44.20", 150, 41, "org", 25)}${tx("J:+46.02", 142, 41, "pnk", 20)}<span class="sp"></span>${tx("查看指标战法", 238, 41, "link")}</div></div><i class="cross c1"></i></section>
      <section class="panel p-vol"><svg width="1212" height="233" viewBox="0 2073 1212 233">
          <rect class="frame" x="14" y="2073" width="1183.500" height="226"></rect><path class="dash" d="M14 2186H1197"></path>
          ${volBars()}${line(V5, "blk")}${line(V10, "org")}</svg>
        <div class="over"><div class="keys row"><span class="pick w3">${tx("成交量", 118, 41)}${caret()}</span>
          ${tx("量:41717", 153, 41, "vg", 15)}${tx("M5:52886", 166, 41, "", 21)}${tx("M10:54981", 185, 41, "org", 21)}${tx("换手率:", 129, 41, "", 22)}${tx("3.10%", 99, 41, "sky", 2)}</div></div><i class="cross c3"></i></section>
      <div class="b2"></div>
      <nav class="feed row">
        <svg class="gem" width="44" height="40"><path d="M9 1H35Q37 1 38 3L44 15Q44 17 43 19L24 38Q22 40 20 38L1 19Q0 17 0 15L6 3Q7 1 9 1Z" fill="#d8b07a"></path><path d="M14 11.500H31" stroke="#fff" stroke-width="4"></path></svg>
        ${tx("Level-2", 212, 61, "lv", 38)}${tx("看点", 95, 48, "gr", 80)}${tx("资讯", 96, 48, "gr", 77)}${tx("盘口", 91, 48, "gr", 76)}${tx("资金", 96, 48, "gr", 81)}
        <div class="hot">${tx("社区", 106, 53, "bold")}</div></nav>
      <footer class="foot">
        <div class="sec"><svg class="caret" width="30" height="17"><path d="M15 0L30 17H0Z"></path></svg>${tx("光学光电子", 186, 38, "sn")}${tx("-0.74%", 121, 40, "neon")}</div>
        <div class="act"><svg width="56" height="62"><path d="M8 1.500H48Q54.500 1.500 54.500 8V47L42 60.500H8Q1.500 60.500 1.500 54V8Q1.500 1.500 8 1.500ZM10 16.500H47M10 24.500H47M10 32.500H47M10 40.500H35"></path></svg>${tx("下单", 73, 37)}</div>
        <div class="act"><svg width="64" height="62"><path d="M20 4.500H44M31.500 24V46M21 35H43"></path><rect x="1.500" y="11.500" width="60" height="45" rx="7"></rect><path d="M10 59H21M42 59H53" stroke-width="5"></path></svg>${tx("诊股", 74, 37)}</div>
        <div class="act"><svg width="54" height="62"><rect x="1.500" y="4" width="51" height="51"></rect><path d="M13 29H41"></path></svg>${tx("删自选", 112, 37)}</div>
        <div class="act"><svg width="58" height="62"><circle cx="29" cy="30" r="27"></circle><path d="M17 22H41M17 38H41"></path></svg>${tx("功能", 74, 37)}</div>
      </footer>
      <svg class="scrawl" width="1212" height="760">
        <path d=${smooth("370,223 350,198 325,178 290,164 232,161 190,167 145,183 90,206")}></path>
        <path d=${smooth("-20,440 -8,520 0,543 20,565 43,595 60,620 79,642 102,660 124,671 155,681 205,684 255,679 309,667 363,645 402,618 448,567 479,517 498,467 514,400 521,333 516,260 495,202 464,161 433,136 386,123 332,120 278,123 232,137 185,157 139,177 85,203 54,228 38,250 15,285 -2,330 -16,380")}></path>
      </svg>`;
  }
}
